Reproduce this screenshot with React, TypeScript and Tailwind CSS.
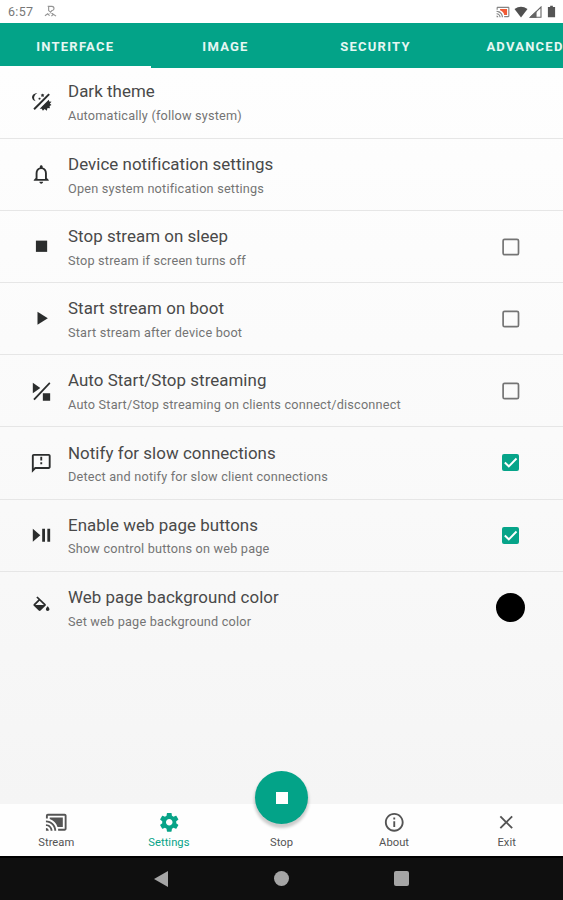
import type { ReactNode } from "react";

const PLAY = "M8 5v14l11-7z";

function Icon({ children, className = "size-[22.5px]" }: { children: ReactNode; className?: string }) {
  return (
    <svg viewBox="0 0 24 24" className={className} fill="currentColor">
      {children}
    </svg>
  );
}

const castPath =
  "M21 3H3c-1.100 0-2 .9-2 2v3h2V5h18v14h-7v2h7c1.100 0 2-.9 2-2V5c0-1.100-.9-2-2-2zM1 18v3h3c0-1.660-1.340-3-3-3zm0-4v2c2.760 0 5 2.240 5 5h2c0-3.870-3.130-7-7-7zm0-4v2c4.970 0 9 4.030 9 9h2c0-6.080-4.930-11-11-11z";

type Row = {
  title: string;
  sub: string;
  icon: ReactNode;
  control?: "off" | "on" | "color";
};

const rows: Row[] = [
  {
    title: "Dark theme",
    sub: "Automatically (follow system)",
    icon: (
      <>
        <path d="M7.800 3.500C3.500 3.500 1.600 6.300 2.400 8.900c.5 1.800 1.900 2.900 3.700 3-1.700-1.600-2.200-3.700-1.300-5.600.6-1.300 1.600-2.200 3-2.800z" />
        <path d="M9.500 8.200l1.500.1.400 1.300-1.300.8-1.200-.9zM12.800 3.700l1 .9 1.400.2-.7 1.300.2 1.300-1.300-.5-1.400.4.200-1.400-.8-1.100 1.300-.1z" />
        <path d="M19.700 3.600l1.500 1.500L5.100 21.200l-1.500-1.500z" />
        <path d="M20 10.300l-9.700 9.800h2.200l1.300 2 1.800-1.900 2.300 1.800.8-2.700 2.500.2-.3-2.500 2-.9-1.700-1.800 1.800-1.900-2.500-.2z" />
      </>
    ),
  },
  {
    title: "Device notification settings",
    sub: "Open system notification settings",
    icon: (
      <path d="M12 22c1.100 0 2-.9 2-2h-4c0 1.100.9 2 2 2zm6-6v-5c0-3.070-1.630-5.640-4.500-6.320V4c0-.830-.670-1.500-1.500-1.500s-1.500.670-1.500 1.500v.680C7.640 5.360 6 7.920 6 11v5l-2 2v1h16v-1l-2-2zm-2 1H8v-6c0-2.480 1.510-4.500 4-4.500s4 2.020 4 4.500v6z" />
    ),
  },
  {
    title: "Stop stream on sleep",
    sub: "Stop stream if screen turns off",
    icon: <path d="M6.300 6h12v12h-12z" />,
    control: "off",
  },
  {
    title: "Start stream on boot",
    sub: "Start stream after device boot",
    icon: <path d={PLAY} />,
    control: "off",
  },
  {
    title: "Auto Start/Stop streaming",
    sub: "Auto Start/Stop streaming on clients connect/disconnect",
    icon: <path d="M3 3v11l8-5.500zM20.500 2.500l1.300 1.300L5 21.500l-1.500-1.300zM13.700 14H21.500v8h-7.800z" />,
    control: "off",
  },
  {
    title: "Notify for slow connections",
    sub: "Detect and notify for slow client connections",
    icon: (
      <path d="M20 2H4c-1.100 0-2 .9-2 2v18l4-4h14c1.100 0 2-.9 2-2V4c0-1.100-.9-2-2-2zm0 14H5.200L4 17.200V4h16v12zM11 5h2v4h-2zm0 6h2v2h-2z" />
    ),
    control: "on",
  },
  {
    title: "Enable web page buttons",
    sub: "Show control buttons on web page",
    icon: <path d="M3 5v14l8-7zM13 5h3v14h-3zM18.500 5h3v14h-3z" />,
    control: "on",
  },
  {
    title: "Web page background color",
    sub: "Set web page background color",
    icon: (
      <path
        d="M16.560 8.940L7.620 0 6.210 1.410l2.380 2.380-5.150 5.150c-.590.590-.590 1.540 0 2.120l5.500 5.500c.290.290.680.440 1.060.440s.770-.150 1.060-.440l5.500-5.500c.590-.580.590-1.530 0-2.120zM5.210 10L10 5.210 14.790 10H5.210zM19 11.500s-2 2.170-2 3.500c0 1.100.9 2 2 2s2-.9 2-2c0-1.330-2-3.500-2-3.500z"
        transform="translate(0.8 0.4) scale(0.95 0.91)"
      />
    ),
    control: "color",
  },
];

function Control({ kind }: { kind?: Row["control"] }) {
  if (kind === "color") return <span className="size-[29px] rounded-full bg-black" />;
  if (kind === "on")
    return (
      <span className="flex size-[17px] items-center justify-center rounded-[2px] bg-[#06a489]">
        <svg viewBox="0 0 17 17" className="size-[17px]" fill="none" stroke="white" strokeWidth="1.900">
          <path d="M2.800 8.500L6.800 12.300 14.500 4.500" />
        </svg>
      </span>
    );
  if (kind === "off")
    return (
      <svg viewBox="0 0 18 18" className="size-[18px]" fill="none" stroke="#747474" strokeWidth="1.700">
        <rect x="1.100" y="1.300" width="15.400" height="15.400" rx="1.500" />
      </svg>
    );
  return null;
}

const navItems: { label: string; icon: ReactNode; active?: boolean }[] = [
  {
    label: "Stream",
    icon: (
      <Icon>
        <path d={castPath} />
        <path d="M5 7v1.630c3.960 1.280 7.090 4.410 8.370 8.370H19V7z" />
      </Icon>
    ),
  },
  {
    label: "Settings",
    active: true,
    icon: (
      <Icon>
        <path d="M19.430 12.980c.040-.320.070-.640.070-.980s-.030-.660-.070-.980l2.110-1.650c.190-.150.240-.420.120-.640l-2-3.460c-.120-.220-.390-.300-.610-.220l-2.490 1c-.520-.400-1.080-.730-1.690-.980l-.380-2.650C14.460 2.180 14.250 2 14 2h-4c-.250 0-.460.180-.490.420l-.380 2.650c-.610.250-1.170.590-1.690.980l-2.490-1c-.230-.090-.490 0-.610.220l-2 3.460c-.130.220-.070.490.120.640l2.110 1.650c-.040.320-.070.650-.070.980s.030.660.070.980l-2.110 1.650c-.190.150-.240.420-.120.640l2 3.460c.120.220.390.300.610.220l2.490-1c.520.400 1.080.730 1.690.980l.380 2.650c.030.240.240.420.490.420h4c.250 0 .460-.180.490-.420l.380-2.650c.610-.250 1.170-.590 1.690-.980l2.490 1c.230.090.490 0 .610-.220l2-3.460c.120-.220.070-.490-.120-.640l-2.110-1.650zM12 15.500c-1.930 0-3.500-1.570-3.500-3.500s1.570-3.500 3.500-3.500 3.500 1.570 3.500 3.500-1.570 3.500-3.500 3.500z" />
      </Icon>
    ),
  },
  { label: "Stop", icon: <span className="size-[22.5px]" /> },
  {
    label: "About",
    icon: (
      <Icon>
        <path d="M11 7h2v2h-2zm0 4h2v6h-2zm1-9C6.480 2 2 6.480 2 12s4.480 10 10 10 10-4.480 10-10S17.520 2 12 2zm0 18c-4.410 0-8-3.590-8-8s3.590-8 8-8 8 3.590 8 8-3.590 8-8 8z" />
      </Icon>
    ),
  },
  {
    label: "Exit",
    icon: (
      <Icon>
        <path d="M19 6.410L17.590 5 12 10.590 6.410 5 5 6.410 10.590 12 5 17.590 6.410 19 12 13.410 17.590 19 19 17.590 13.410 12z" />
      </Icon>
    ),
  },
];

export default function App() {
  return (
    <div className="flex h-[900px] w-[563px] flex-col overflow-hidden bg-white font-[Roboto,sans-serif]">
      <header className="flex h-[23px] shrink-0 items-center bg-white pt-[2px] pr-[7px] pl-2 text-[#777]">
        <span className="w-[36px] text-[12.500px] tracking-[0.3px]">6:57</span>
        <svg viewBox="0 0 14 14" className="mb-[2px] size-[13px]" fill="none" stroke="#949494" strokeWidth="1.200">
          <path d="M4 1.500h4.500a2 2 0 0 1 0 4.500L6 9M5 2v4l5 4M1 11.500l3-2 2 2M8 12l2-2 3 2" />
        </svg>
        <div className="mb-[2px] ml-auto flex items-center">
          <svg viewBox="0 0 24 24" className="mr-[4px] size-[14px]" fill="#858585">
            <path d={castPath} />
            <path fill="#f15b35" d="M7 7h12v10h-5c-.5-4-3.500-7-7-8z" />
          </svg>
          <svg viewBox="0 0 14 12" className="h-[12px] w-[14px]" fill="#505050">
            <path d="M.5 3Q7-1.500 13.500 3L7 11.500z" />
          </svg>
          <svg viewBox="0 0 14 12" className="ml-px h-[12px] w-[14px]" fill="none" stroke="#666" strokeWidth="1.100">
            <path d="M1.500 11.200L12 1v10.200z" />
            <path fill="#666" d="M1.500 11.200L7 6v5.200z" />
          </svg>
          <svg viewBox="0 0 10 13" className="ml-[4px] h-[13px] w-[9px]" fill="#555">
            <path d="M3.500 0h3v1.500H9V13H1V1.500h2.500z" />
          </svg>
        </div>
      </header>

      <nav className="flex h-[44.500px] shrink-0 overflow-hidden bg-[#03a388] text-[13px] font-bold tracking-[1.250px] text-[#e6f7f3]">
        <div className="flex w-[150.500px] shrink-0 items-center justify-center border-b-2 border-white pt-[4px]">INTERFACE</div>
        <div className="flex w-[150px] shrink-0 items-center justify-center pt-[2px]">IMAGE</div>
        <div className="flex w-[150px] shrink-0 items-center justify-center pt-[2px]">SECURITY</div>
        <div className="flex w-[149px] shrink-0 items-center justify-center pt-[2px]">ADVANCED</div>
      </nav>

      <main className="flex min-h-0 flex-1 flex-col bg-linear-to-b from-[#fefefe] via-[#fafafa] to-[#f5f5f5]">
        {rows.map((row, i) => (
          <section
            key={row.title}
            className={
              "flex shrink-0 items-center pl-[30px] " +
              (i === 0 ? "h-[71.300px] pb-[2px] " : "h-[72.150px] ") +
              (i < rows.length - 1 ? "border-b border-[#e6e6e6]" : "border-b border-transparent")
            }
          >
            <div className="flex w-[38px] shrink-0 text-[#2b2d2d]">
              <Icon>{row.icon}</Icon>
            </div>
            <div className="flex flex-1 flex-col whitespace-nowrap pt-[4px]">
              <span className="text-[16.900px] leading-6 tracking-[0.050px] text-[#494949]">{row.title}</span>
              <span className="mt-[0.600px] text-[12.700px] leading-6 tracking-[0.200px] text-[#747474]">{row.sub}</span>
            </div>
            <div className="flex w-[105px] shrink-0 items-center justify-center">
              <Control kind={row.control} />
            </div>
          </section>
        ))}
      </main>

      <footer className="relative flex h-[52px] shrink-0 bg-[#fefefe]">
        {navItems.map((item) => (
          <div
            key={item.label}
            className={"flex flex-1 flex-col items-center pt-[6.500px] " + (item.active ? "text-[#07a387]" : "text-[#545454]")}
          >
            {item.icon}
            <span className="mt-[1.500px] text-[11.200px] leading-4 tracking-[0.050px]">{item.label}</span>
          </div>
        ))}
        <button className="absolute -top-[33px] left-[255px] flex size-[53px] items-center justify-center rounded-full bg-[#03a388] shadow-[0_3px_3px_1px_rgba(0,0,0,0.2)]">
          <span className="size-3 bg-white" />
        </button>
      </footer>

      <div className="flex h-[44px] shrink-0 items-center justify-center gap-[105.500px] border-t-2 border-black bg-[#0f0f0f] pb-px">
        <svg viewBox="0 0 14 16" className="h-4 w-[14px]" fill="#a5a5a5">
          <path d="M14 0v16L0 8z" />
        </svg>
        <span className="size-[15px] rounded-full bg-[#a5a5a5]" />
        <span className="size-[15px] rounded-[2px] bg-[#a5a5a5]" />
      </div>
    </div>
  );
}
